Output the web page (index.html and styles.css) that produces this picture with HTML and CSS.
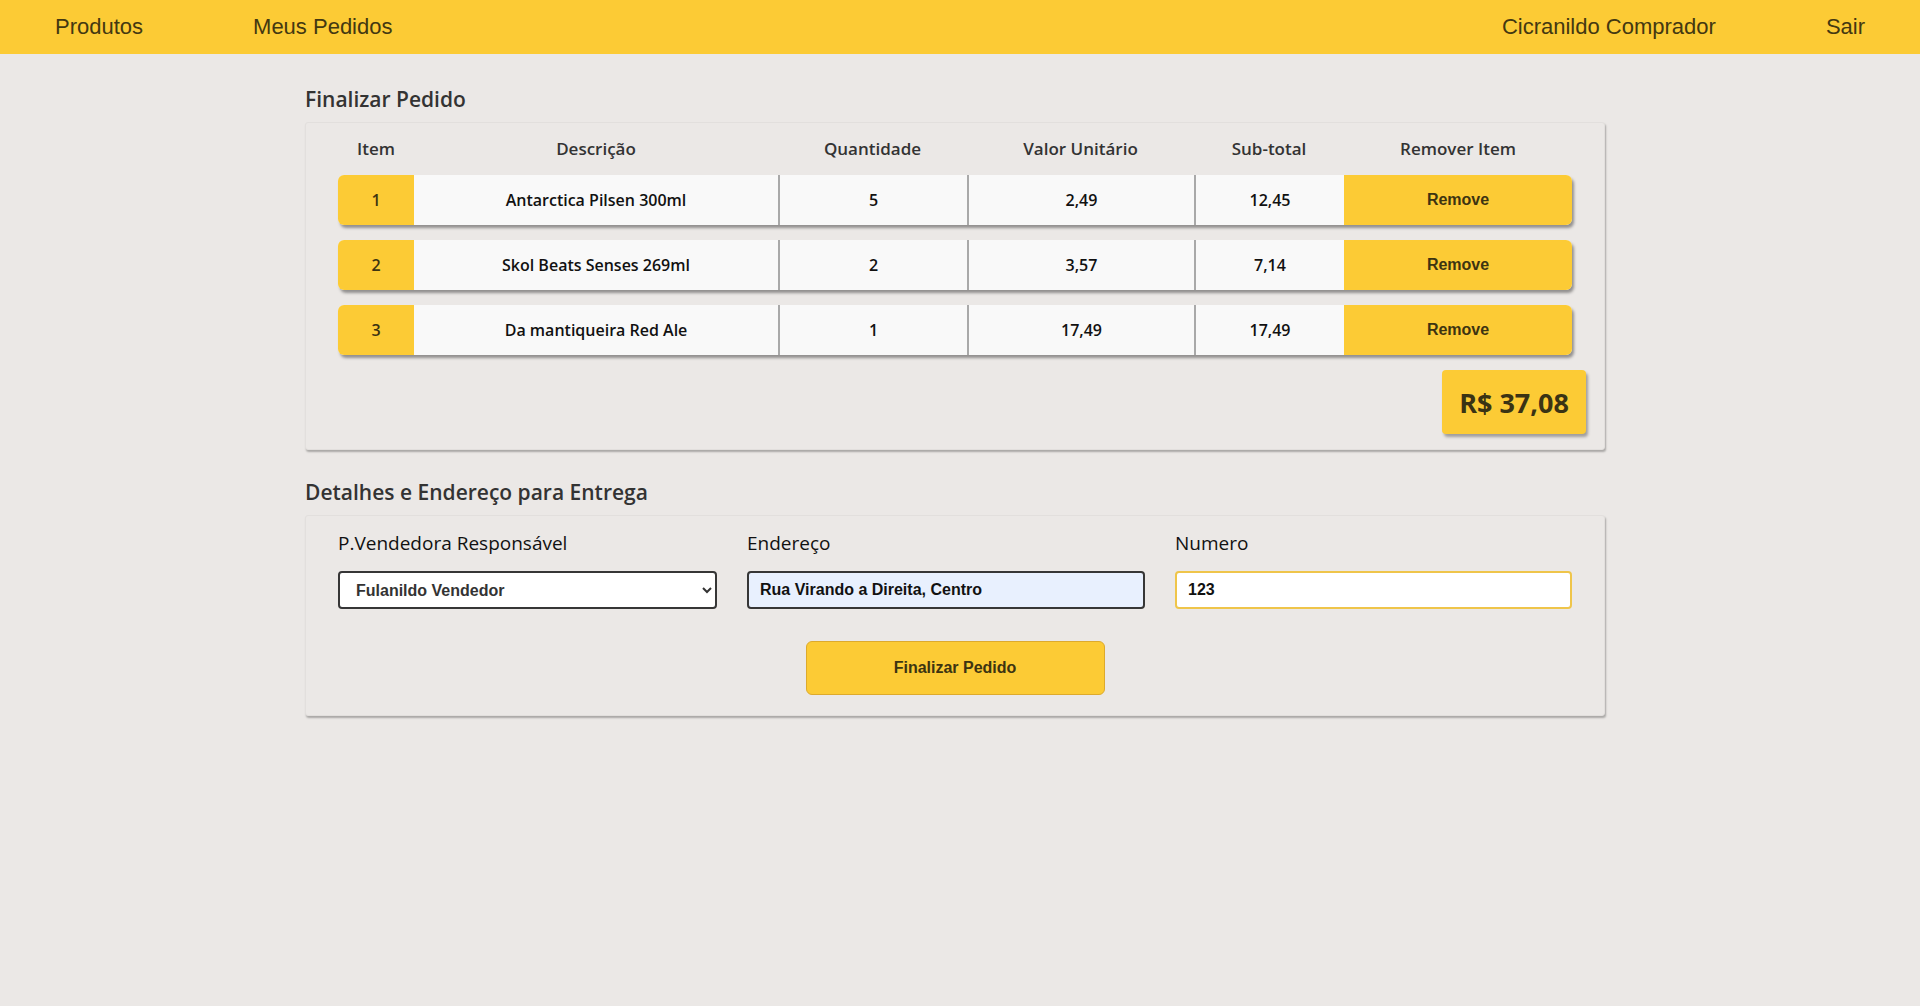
FILE: index.html
```html
<!DOCTYPE html>
<html lang="pt-BR">
<head>
<meta charset="utf-8">
<title>Finalizar Pedido</title>
<link rel="stylesheet" href="styles.css">
</head>
<body>
<nav class="topbar">
  <div class="nav-group">
    <a class="nav-link" href="#">Produtos</a>
    <a class="nav-link" href="#">Meus Pedidos</a>
  </div>
  <div class="nav-group">
    <span class="nav-link">Cicranildo Comprador</span>
    <a class="nav-link" href="#">Sair</a>
  </div>
</nav>
<main class="page">
  <h2 class="section-title first">Finalizar Pedido</h2>
  <section class="card order-card">
    <div class="order-grid order-head">
      <div>Item</div>
      <div>Descrição</div>
      <div>Quantidade</div>
      <div>Valor Unitário</div>
      <div>Sub-total</div>
      <div>Remover Item</div>
    </div>
    <div class="order-grid order-row">
      <div class="cell cell-num">1</div>
      <div class="cell">Antarctica Pilsen 300ml</div>
      <div class="cell sep">5</div>
      <div class="cell sep">2,49</div>
      <div class="cell sep">12,45</div>
      <button class="cell cell-remove">Remove</button>
    </div>
    <div class="order-grid order-row">
      <div class="cell cell-num">2</div>
      <div class="cell">Skol Beats Senses 269ml</div>
      <div class="cell sep">2</div>
      <div class="cell sep">3,57</div>
      <div class="cell sep">7,14</div>
      <button class="cell cell-remove">Remove</button>
    </div>
    <div class="order-grid order-row">
      <div class="cell cell-num">3</div>
      <div class="cell">Da mantiqueira Red Ale</div>
      <div class="cell sep">1</div>
      <div class="cell sep">17,49</div>
      <div class="cell sep">17,49</div>
      <button class="cell cell-remove">Remove</button>
    </div>
    <div class="total">R$ 37,08</div>
  </section>

  <h2 class="section-title">Detalhes e Endereço para Entrega</h2>
  <section class="card details-card">
    <div class="fields">
      <div class="field">
        <label class="field-label" for="seller">P.Vendedora Responsável</label>
        <select id="seller" class="control control-select">
          <option>Fulanildo Vendedor</option>
        </select>
      </div>
      <div class="field">
        <label class="field-label" for="address">Endereço</label>
        <input id="address" class="control control-autofill" type="text" value="Rua Virando a Direita, Centro">
      </div>
      <div class="field">
        <label class="field-label" for="number">Numero</label>
        <input id="number" class="control control-focus" type="text" value="123">
      </div>
    </div>
    <button class="finish-btn">Finalizar Pedido</button>
  </section>
</main>
</body>
</html>
```

FILE: styles.css
```css
* {
  box-sizing: border-box;
}

html, body {
  margin: 0;
  padding: 0;
}

body {
  background: #ebe8e6;
  font-family: "Open Sans", "Noto Sans", sans-serif;
  color: #222;
  min-height: 1006px;
}

.topbar {
  height: 54px;
  background: #fccb35;
  display: flex;
  justify-content: space-between;
  align-items: center;
}

.nav-group {
  display: flex;
  align-items: center;
}

.nav-link {
  padding: 0 55px;
  font-family: "Liberation Sans", Arial, sans-serif;
  font-size: 22px;
  color: #433811;
  text-decoration: none;
}

.page {
  width: 1300px;
  margin-left: 305px;
}

.section-title {
  margin: 27px 0 8px;
  font-size: 21px;
  line-height: 30px;
  font-weight: 600;
  color: #333;
}

.section-title.first {
  margin-top: 30px;
}

.card {
  background: #ebe8e6;
  border: 1px solid #e2dfdd;
  border-radius: 3px;
  box-shadow: 1px 2px 2px rgba(0, 0, 0, 0.28);
}

.order-card {
  display: flex;
  flex-direction: column;
  gap: 15px;
  padding: 15px 18px 15px;
}

.order-grid {
  display: grid;
  grid-template-columns: 76px 364px 189px 227px 150px 228px;
  margin: 0 14px;
}

.order-head {
  height: 22px;
  font-size: 17px;
  line-height: 22px;
  font-weight: 600;
  color: #333;
  text-align: center;
}

.order-row {
  height: 50px;
  border-radius: 6px;
  overflow: hidden;
  background: #f9f9f9;
  box-shadow: 2px 3px 3px rgba(0, 0, 0, 0.38);
}

.cell {
  display: flex;
  align-items: center;
  justify-content: center;
  font-size: 16px;
  font-weight: 600;
  color: #111;
}

.cell.sep {
  border-left: 2px solid #a9a9a9;
}

.cell-num {
  background: #fccb35;
  color: #3d3411;
  font-weight: 600;
}

.cell-remove {
  border: 0;
  margin: 0;
  padding: 0;
  background: #fccb35;
  font-family: "Liberation Sans", Arial, sans-serif;
  font-size: 16px;
  font-weight: 700;
  color: #3d3411;
  cursor: pointer;
}

.total {
  align-self: flex-end;
  width: 144px;
  height: 64px;
  display: flex;
  align-items: center;
  justify-content: center;
  background: #fccb35;
  border-radius: 4px;
  box-shadow: 2px 3px 3px rgba(0, 0, 0, 0.32);
  font-size: 27px;
  font-weight: 700;
  color: #3a3314;
}

.details-card {
  padding: 14px 32px 20px;
}

.fields {
  display: grid;
  grid-template-columns: 379px 398px 1fr;
  column-gap: 30px;
}

.field {
  display: flex;
  flex-direction: column;
}

.field-label {
  font-size: 19px;
  line-height: 26px;
  color: #111;
  margin-bottom: 15px;
}

.control {
  height: 38px;
  border: 2px solid #363636;
  border-radius: 4px;
  background: #fff;
  font-family: "Liberation Sans", Arial, sans-serif;
  font-size: 16px;
  font-weight: 700;
  color: #111;
  padding: 0 11px;
  outline: none;
}

.control-select {
  padding-left: 12px;
  color: #333;
}

.control-autofill {
  background: #e8f0fe;
}

.control-focus {
  border-color: #efc54a;
}

.finish-btn {
  display: block;
  width: 299px;
  height: 54px;
  margin: 32px auto 0;
  background: #fccb35;
  border: 1px solid #ddaa2c;
  border-radius: 6px;
  font-family: "Liberation Sans", Arial, sans-serif;
  font-size: 16px;
  font-weight: 700;
  color: #3d3411;
  cursor: pointer;
}
```
